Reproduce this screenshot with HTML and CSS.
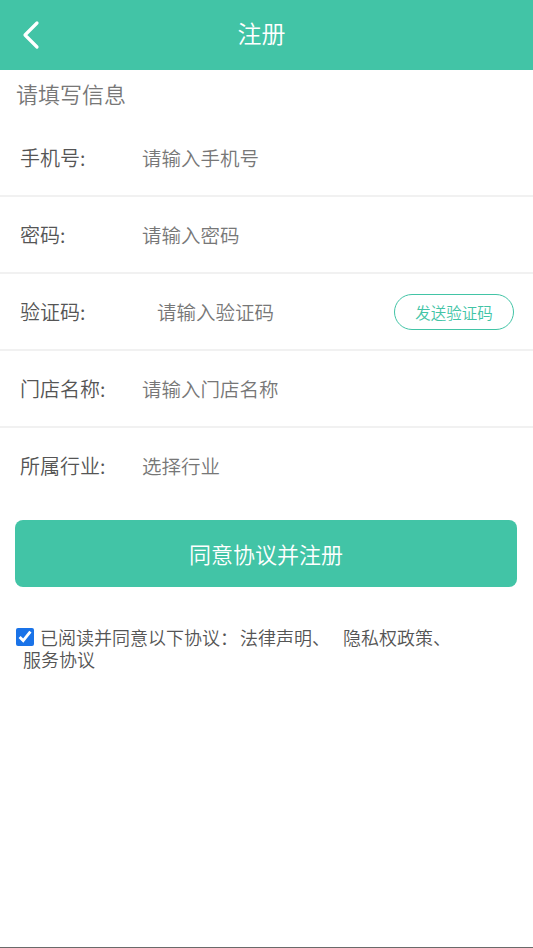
FILE: index.html
```html
<!DOCTYPE html>
<html lang="zh-CN">
<head>
<meta charset="utf-8">
<title>注册</title>
<link rel="stylesheet" href="styles.css">
</head>
<body>
<div class="page">
  <header class="topbar">
    <span class="back">
      <svg width="20" height="30" viewBox="0 0 20 30"><polyline points="15,3 3,15 15,27" fill="none" stroke="#fff" stroke-width="3.2" stroke-linecap="round" stroke-linejoin="round"/></svg>
    </span>
    <h1 class="title">注册</h1>
  </header>
  <div class="subtitle">请填写信息</div>
  <div class="form">
    <div class="row"><span class="label">手机号:</span><span class="ph">请输入手机号</span></div>
    <div class="row"><span class="label">密码:</span><span class="ph">请输入密码</span></div>
    <div class="row"><span class="label">验证码:</span><span class="ph ph-code">请输入验证码</span><span class="send">发送验证码</span></div>
    <div class="row"><span class="label">门店名称:</span><span class="ph">请输入门店名称</span></div>
    <div class="row last"><span class="label">所属行业:</span><span class="ph">选择行业</span></div>
  </div>
  <div class="submit">同意协议并注册</div>
  <div class="agree">
    <div class="agree-line"><input type="checkbox" class="chk" checked><span>已阅读并同意以下协议：</span><span class="link1">法律声明、</span><span class="link2">隐私权政策、</span></div>
    <div class="agree-line2">服务协议</div>
  </div>
</div>
</body>
</html>
```
FILE: styles.css
```css
html, body {
  margin: 0;
  padding: 0;
  background: #fff;
}
body {
  font-family: "Noto Sans CJK SC", "Noto Sans", sans-serif;
  font-weight: 350;
}
.page {
  height: 948px;
  box-sizing: border-box;
  border-bottom: 1px solid #6a6a6a;
  display: flex;
  flex-direction: column;
}
.topbar {
  height: 70px;
  box-sizing: border-box;
  padding: 0 10px 4px 0;
  background: #42c4a6;
  display: flex;
  align-items: center;
  justify-content: center;
  position: relative;
}
.back {
  position: absolute;
  left: 22px;
  top: 20px;
  width: 20px;
  height: 30px;
  display: flex;
}
.title {
  margin: 0;
  font-weight: 350;
  font-size: 24px;
  color: #fff;
  line-height: 1;
}
.subtitle {
  height: 50px;
  line-height: 46px;
  padding-left: 16px;
  font-size: 22px;
  color: #777;
}
.form {
  display: flex;
  flex-direction: column;
}
.row {
  height: 75px;
  border-bottom: 2px solid #f1f1f1;
  display: flex;
  align-items: center;
  padding: 0 19px 0 20px;
}
.row.last {
  border-bottom: none;
}
.label {
  width: 122px;
  flex: none;
  font-size: 20px;
  color: #555;
}
.ph {
  flex: 1;
  font-size: 19.5px;
  color: #777;
}
.ph-code {
  padding-left: 15px;
}
.send {
  width: 118px;
  height: 34px;
  border: 1px solid #42c4a6;
  border-radius: 18px;
  display: flex;
  align-items: center;
  justify-content: center;
  font-size: 15.5px;
  color: #42c4a6;
}
.submit {
  margin: 17px 16px 0 15px;
  height: 67px;
  border-radius: 8px;
  background: #42c4a6;
  color: #fff;
  font-size: 22px;
  display: flex;
  align-items: center;
  justify-content: center;
  padding-bottom: 2px;
  box-sizing: border-box;
}
.agree {
  margin-top: 39px;
  padding-left: 15px;
  font-size: 18px;
  color: #555;
  line-height: 22px;
}
.agree-line {
  display: flex;
  align-items: center;
}
.chk {
  width: 18px;
  height: 18px;
  margin: 0 6px 0 1px;
  accent-color: #1a73e8;
}
.link1 {
  margin-left: 2px;
}
.link2 {
  margin-left: 13px;
}
.agree-line2 {
  padding-left: 8px;
  line-height: 23px;
}
```
